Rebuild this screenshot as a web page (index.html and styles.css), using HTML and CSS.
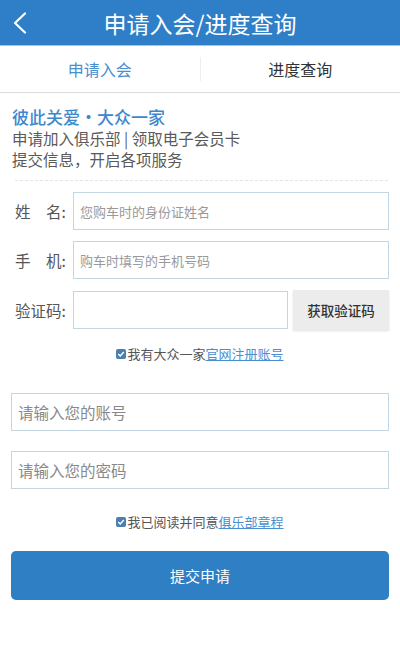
FILE: index.html
```html
<!DOCTYPE html>
<html lang="zh-CN">
<head>
    <meta charset="UTF-8">
    <meta name="viewport" content="width=device-width, initial-scale=1.0">
    <title>申请入会/进度查询</title>
    <link rel="stylesheet" href="styles.css">
</head>
<body>
    <div class="header">
        <a class="back" href="#">
            <svg width="16" height="22" viewBox="0 0 16 22">
                <path d="M13 1.5 L3 11 L13 20.5" fill="none" stroke="#fff" stroke-width="2.2" stroke-linecap="round" stroke-linejoin="round"/>
            </svg>
        </a>
        <h1>申请入会/进度查询</h1>
        <span></span>
    </div>

    <div class="tabs">
        <div class="tab active">申请入会</div>
        <span class="tab-divider"></span>
        <div class="tab">进度查询</div>
    </div>

    <div class="intro">
        <p class="slogan">彼此关爱・大众一家</p>
        <p>申请加入俱乐部 | 领取电子会员卡</p>
        <p>提交信息，开启各项服务</p>
    </div>
    <div class="dashed"></div>

    <form class="form">
        <div class="row">
            <label>姓　名:</label>
            <input type="text" placeholder="您购车时的身份证姓名">
        </div>
        <div class="row">
            <label>手　机:</label>
            <input type="text" placeholder="购车时填写的手机号码">
        </div>
        <div class="row code-row">
            <label>验证码:</label>
            <input type="text">
            <button type="button" class="code-btn">获取验证码</button>
        </div>

        <div class="check">
            <span class="box">
                <svg width="10" height="10" viewBox="0 0 10 10"><path d="M2.2 5 L4.2 7 L7.8 3" fill="none" stroke="#fff" stroke-width="1.4"/></svg>
            </span>我有大众一家<a href="#">官网注册账号</a>
        </div>

        <input class="wide" type="text" placeholder="请输入您的账号">
        <input class="wide second" type="password" placeholder="请输入您的密码">

        <div class="check agree">
            <span class="box">
                <svg width="10" height="10" viewBox="0 0 10 10"><path d="M2.2 5 L4.2 7 L7.8 3" fill="none" stroke="#fff" stroke-width="1.4"/></svg>
            </span>我已阅读并同意<a href="#">俱乐部章程</a>
        </div>

        <button type="button" class="submit">提交申请</button>
    </form>
</body>
</html>
```

FILE: styles.css
```css
body {
    margin: 0;
    background: #fff;
    font-family: "Noto Sans CJK SC", "Noto Sans", sans-serif;
    color: #555;
}
p {
    margin: 0;
}
.header {
    height: 45px;
    background: #2f7fc8;
    display: grid;
    grid-template-columns: 50px 1fr 50px;
    align-items: center;
    border-bottom: 1px solid #9fc3e6;
}
.back {
    display: flex;
    padding-left: 12px;
}
.header h1 {
    margin: 0;
    text-align: center;
    color: #fff;
    font-size: 23px;
    font-weight: normal;
}
.tabs {
    height: 46px;
    display: flex;
    align-items: center;
    border-bottom: 1px solid #dcdcdc;
}
.tab {
    flex: 1;
    text-align: center;
    font-size: 16px;
    color: #333;
}
.tab.active {
    color: #4a8fd0;
}
.tab-divider {
    width: 1px;
    height: 24px;
    background: #eeeeee;
}
.intro {
    padding: 14px 12px 0;
    font-size: 15.5px;
    line-height: 21px;
    color: #5a5a5a;
}
.intro .slogan {
    color: #3d88cc;
    font-size: 17px;
    line-height: 20px;
    margin-bottom: 1px;
    font-weight: 500;
}
.dashed {
    margin: 10px 12px 0 15px;
    border-top: 1px dashed #e4e4e4;
}
.form {
    padding: 11px 11px 0;
}
.row {
    display: flex;
    align-items: center;
    margin-bottom: 11px;
}
.row label {
    width: 62px;
    padding-left: 4px;
    box-sizing: border-box;
    font-size: 15.5px;
    color: #555;
}
.row input,
.wide {
    flex: 1;
    height: 38px;
    box-sizing: border-box;
    border: 1px solid #c3d6e4;
    padding: 0 6px;
    font-family: inherit;
    font-size: 13px;
    color: #333;
    outline: none;
}
.row input::placeholder {
    color: #999;
}
.code-row {
    margin-top: 1px;
    margin-bottom: 0;
}
.code-row input {
    flex: none;
    width: 215px;
}
.code-btn {
    margin-left: 5px;
    width: 96px;
    height: 40px;
    border: none;
    background: #ececec;
    box-shadow: 0 1px 2px rgba(0, 0, 0, 0.12);
    font-family: inherit;
    font-size: 13.5px;
    font-weight: 500;
    color: #333;
}
.check {
    display: flex;
    justify-content: center;
    align-items: center;
    margin-top: 14px;
    font-size: 13px;
    color: #555;
}
.check a {
    color: #4a8fd0;
}
.box {
    display: flex;
    width: 10px;
    height: 10px;
    border-radius: 2px;
    background: #4a7fb0;
    margin-right: 1px;
}
.wide {
    display: block;
    width: 100%;
    margin-top: 30px;
    font-size: 15.5px;
}
.wide::placeholder {
    color: #888;
}
.wide.second {
    margin-top: 20px;
}
.agree {
    margin-top: 23px;
}
.submit {
    display: block;
    width: 100%;
    height: 49px;
    margin-top: 20px;
    border: none;
    border-radius: 5px;
    background: #2f7fc5;
    color: #fff;
    font-family: inherit;
    font-size: 15px;
}
```
